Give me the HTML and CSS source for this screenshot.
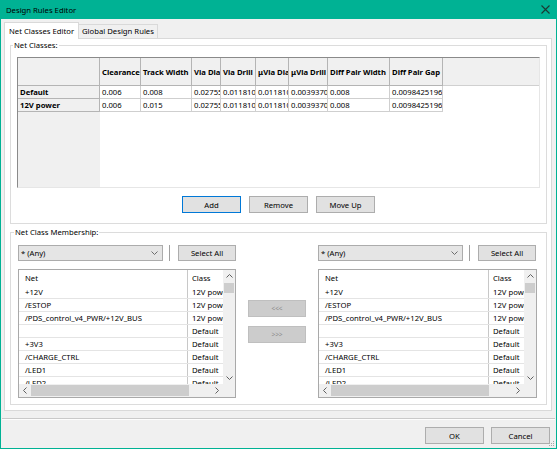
FILE: index.html
```html
<!DOCTYPE html>
<html>
<head>
<meta charset="utf-8">
<title>Design Rules Editor</title>
<link rel="stylesheet" href="styles.css">
</head>
<body>
<div class="window">
  <div class="titlebar">
    <span class="title">Design Rules Editor</span>
    <svg class="close" width="9" height="9" viewBox="0 0 9 9"><path d="M0.5 0.5L8.5 8.5M8.5 0.5L0.5 8.5" stroke="#1b3a33" stroke-width="1.1" fill="none"/></svg>
  </div>
  <div class="client">
    <div class="tabs">
      <div class="tab active">Net Classes Editor</div>
      <div class="tab">Global Design Rules</div>
    </div>
    <div class="page">
      <fieldset class="group g1">
        <legend>Net Classes:</legend>
        <div class="grid">
          <div class="hc corner"></div>
          <div class="hc">Clearance</div>
          <div class="hc">Track Width</div>
          <div class="hc">Via Dia</div>
          <div class="hc">Via Drill</div>
          <div class="hc">μVia Dia</div>
          <div class="hc">μVia Drill</div>
          <div class="hc">Diff Pair Width</div>
          <div class="hc">Diff Pair Gap</div>
          <div class="hfill"></div>

          <div class="rl">Default</div>
          <div class="dc">0.006</div>
          <div class="dc">0.008</div>
          <div class="dc">0.027559</div>
          <div class="dc">0.011810</div>
          <div class="dc">0.011810</div>
          <div class="dc">0.0039370</div>
          <div class="dc">0.008</div>
          <div class="dc">0.00984251968</div>
          <div class="dfill"></div>

          <div class="rl">12V power</div>
          <div class="dc">0.006</div>
          <div class="dc">0.015</div>
          <div class="dc">0.027559</div>
          <div class="dc">0.011810</div>
          <div class="dc">0.011810</div>
          <div class="dc">0.0039370</div>
          <div class="dc">0.008</div>
          <div class="dc">0.00984251968</div>
          <div class="dfill"></div>

          <div class="lfill"></div>
          <div class="bfill"></div>
        </div>
        <div class="btnrow">
          <button class="btn default">Add</button>
          <button class="btn">Remove</button>
          <button class="btn">Move Up</button>
        </div>
      </fieldset>

      <fieldset class="group g2">
        <legend>Net Class Membership:</legend>
        <div class="members">
          <div class="side left">
            <div class="toolbar">
              <div class="combo"><span>* (Any)</span><svg width="7" height="4" viewBox="0 0 7 4"><path d="M0.5 0.5L3.5 3.5L6.5 0.5" stroke="#6d6d6d" fill="none"/></svg></div>
              <div class="vsep"></div>
              <button class="btn selall">Select All</button>
            </div>
            <div class="list">
              <div class="lmain">
                <div class="ltable">
                  <div class="lrow lhead"><div class="cnet">Net</div><div class="ccls">Class</div></div>
                  <div class="lrow"><div class="cnet">+12V</div><div class="ccls">12V power</div></div>
                  <div class="lrow"><div class="cnet">/ESTOP</div><div class="ccls">12V power</div></div>
                  <div class="lrow"><div class="cnet">/PDS_control_v4_PWR/+12V_BUS</div><div class="ccls">12V power</div></div>
                  <div class="lrow"><div class="cnet"></div><div class="ccls">Default</div></div>
                  <div class="lrow"><div class="cnet">+3V3</div><div class="ccls">Default</div></div>
                  <div class="lrow"><div class="cnet">/CHARGE_CTRL</div><div class="ccls">Default</div></div>
                  <div class="lrow"><div class="cnet">/LED1</div><div class="ccls">Default</div></div>
                  <div class="lrow"><div class="cnet">/LED2</div><div class="ccls">Default</div></div>
                </div>
                <div class="vscroll">
                  <div class="arrow"><svg width="7" height="4" viewBox="0 0 7 4"><path d="M0.5 3.5L3.5 0.5L6.5 3.5" stroke="#606060" fill="none"/></svg></div>
                  <div class="vtrack"><div class="vthumb"></div></div>
                  <div class="arrow"><svg width="7" height="4" viewBox="0 0 7 4"><path d="M0.5 0.5L3.5 3.5L6.5 0.5" stroke="#606060" fill="none"/></svg></div>
                </div>
              </div>
              <div class="hbar">
                <div class="hscroll">
                  <div class="arrow"><svg width="4" height="7" viewBox="0 0 4 7"><path d="M3.5 0.5L0.5 3.5L3.5 6.5" stroke="#606060" fill="none"/></svg></div>
                  <div class="hthumb"></div>
                  <div class="htrack"></div>
                  <div class="arrow"><svg width="4" height="7" viewBox="0 0 4 7"><path d="M0.5 0.5L3.5 3.5L0.5 6.5" stroke="#606060" fill="none"/></svg></div>
                </div>
                <div class="sbcorner"></div>
              </div>
            </div>
          </div>

          <div class="middle">
            <button class="btn disabled">&lt;&lt;&lt;</button>
            <button class="btn disabled">&gt;&gt;&gt;</button>
          </div>

          <div class="side right">
            <div class="toolbar">
              <div class="combo"><span>* (Any)</span><svg width="7" height="4" viewBox="0 0 7 4"><path d="M0.5 0.5L3.5 3.5L6.5 0.5" stroke="#6d6d6d" fill="none"/></svg></div>
              <div class="vsep"></div>
              <button class="btn selall">Select All</button>
            </div>
            <div class="list">
              <div class="lmain">
                <div class="ltable">
                  <div class="lrow lhead"><div class="cnet">Net</div><div class="ccls">Class</div></div>
                  <div class="lrow"><div class="cnet">+12V</div><div class="ccls">12V power</div></div>
                  <div class="lrow"><div class="cnet">/ESTOP</div><div class="ccls">12V power</div></div>
                  <div class="lrow"><div class="cnet">/PDS_control_v4_PWR/+12V_BUS</div><div class="ccls">12V power</div></div>
                  <div class="lrow"><div class="cnet"></div><div class="ccls">Default</div></div>
                  <div class="lrow"><div class="cnet">+3V3</div><div class="ccls">Default</div></div>
                  <div class="lrow"><div class="cnet">/CHARGE_CTRL</div><div class="ccls">Default</div></div>
                  <div class="lrow"><div class="cnet">/LED1</div><div class="ccls">Default</div></div>
                  <div class="lrow"><div class="cnet">/LED2</div><div class="ccls">Default</div></div>
                </div>
                <div class="vscroll">
                  <div class="arrow"><svg width="7" height="4" viewBox="0 0 7 4"><path d="M0.5 3.5L3.5 0.5L6.5 3.5" stroke="#606060" fill="none"/></svg></div>
                  <div class="vtrack"><div class="vthumb"></div></div>
                  <div class="arrow"><svg width="7" height="4" viewBox="0 0 7 4"><path d="M0.5 0.5L3.5 3.5L6.5 0.5" stroke="#606060" fill="none"/></svg></div>
                </div>
              </div>
              <div class="hbar">
                <div class="hscroll">
                  <div class="arrow"><svg width="4" height="7" viewBox="0 0 4 7"><path d="M3.5 0.5L0.5 3.5L3.5 6.5" stroke="#606060" fill="none"/></svg></div>
                  <div class="hthumb"></div>
                  <div class="htrack"></div>
                  <div class="arrow"><svg width="4" height="7" viewBox="0 0 4 7"><path d="M0.5 0.5L3.5 3.5L0.5 6.5" stroke="#606060" fill="none"/></svg></div>
                </div>
                <div class="sbcorner"></div>
              </div>
            </div>
          </div>
        </div>
      </fieldset>
    </div>
    <div class="separator"></div>
    <div class="dlgbtns">
      <button class="btn">OK</button>
      <button class="btn">Cancel</button>
    </div>
  </div>
  <svg class="grip" width="6" height="6" viewBox="0 0 6 6">
    <rect x="4" y="0" width="1" height="1" fill="#a8a8a8"/>
    <rect x="2" y="2" width="1" height="1" fill="#a8a8a8"/>
    <rect x="4" y="2" width="1" height="1" fill="#a8a8a8"/>
    <rect x="0" y="4" width="1" height="1" fill="#a8a8a8"/>
    <rect x="2" y="4" width="1" height="1" fill="#a8a8a8"/>
    <rect x="4" y="4" width="1" height="1" fill="#a8a8a8"/>
  </svg>
</div>
</body>
</html>
```

FILE: styles.css
```css
* { box-sizing: border-box; }
html, body { margin: 0; padding: 0; }
body {
  width: 557px;
  height: 449px;
  overflow: hidden;
  font-family: "Noto Sans", "Open Sans", sans-serif;
  font-size: 7.7px;
  color: #000;
  background: #f0f0f0;
}
.window {
  position: relative;
  width: 557px;
  height: 449px;
  border: 1px solid #00b294;
  border-top: 0;
  display: flex;
  flex-direction: column;
  background: #f0f0f0;
}
.titlebar {
  height: 19px;
  flex: none;
  background: #00b294;
  display: flex;
  align-items: center;
  justify-content: space-between;
  padding: 0 6px 0 5px;
  color: #000;
}
.client {
  flex: 1;
  display: flex;
  flex-direction: column;
  padding: 3px 4px 0 3px;
}
.tabs {
  display: flex;
  align-items: flex-end;
  height: 16px;
  position: relative;
  z-index: 1;
}
.tab {
  height: 14px;
  border: 1px solid #d9d9d9;
  border-bottom: 0;
  background: #f0f0f0;
  padding: 0 3px;
  line-height: 13px;
  white-space: nowrap;
}
.tab + .tab { border-left: 0; }
.tab.active {
  height: 17px;
  margin-bottom: -1px;
  background: #fff;
  width: 75px;
  padding-left: 4px;
  line-height: 16px;
}
.page {
  border: 1px solid #d9d9d9;
  background: #fff;
  padding: 1px 4px 5px 5px;
  display: flex;
  flex-direction: column;
}
.group {
  margin: 0;
  border: 1px solid #dcdcdc;
  min-width: 0;
}
.group legend {
  padding: 0 1px;
  margin-left: -4px;
  line-height: 11px;
}
.g1 { padding: 6px 6px 10px 6px; }
.g2 { padding: 7px 9px 6px 7px; margin-top: 3px; }
.grid {
  height: 131px;
  display: grid;
  grid-template-columns: 82px 41px 51px 29px 35px 33px 39px 62px 53px 1fr;
  grid-template-rows: 28px 13px 13px 1fr;
  border-top: 1px solid #8a8a8a;
  border-left: 1px solid #8a8a8a;
  border-right: 1px solid #e6e6e6;
  border-bottom: 1px solid #e6e6e6;
  background: #fff;
}
.hc, .rl, .dc {
  overflow: hidden;
  white-space: nowrap;
  padding-left: 2px;
  display: flex;
  align-items: center;
}
.hc {
  background: #f0f0f0;
  font-weight: bold;
  border-right: 1px solid #b4b4b4;
  border-bottom: 1px solid #b4b4b4;
}
.hfill {
  background: #f0f0f0;
  border-bottom: 1px solid #d0d0d0;
}
.rl {
  background: #f0f0f0;
  font-weight: bold;
  border-right: 1px solid #b4b4b4;
  border-bottom: 1px solid #b4b4b4;
}
.dc {
  border-right: 1px solid #cfcfcf;
  border-bottom: 1px solid #cfcfcf;
}
.lfill { background: #f0f0f0; }
.bfill { grid-column: 2 / -1; }
.btnrow {
  display: flex;
  justify-content: center;
  gap: 8px;
  margin-top: 8px;
}
.btn {
  font: inherit;
  color: #000;
  height: 17px;
  width: 59px;
  padding: 0;
  background: #e1e1e1;
  border: 1px solid #adadad;
  border-radius: 0;
  white-space: nowrap;
}
.btn.default { border-color: #0078d7; }
.btn.disabled {
  background: #cccccc;
  border-color: #bfbfbf;
  color: #8d8d8d;
  width: 58px;
  font-size: 6.5px;
}
.members {
  display: flex;
}
.side { display: flex; flex-direction: column; }
.side.left { width: 218px; }
.side.right { flex: 1; }
.toolbar {
  display: flex;
  align-items: center;
  height: 16px;
}
.combo {
  flex: 1;
  height: 16px;
  background: #e5e5e5;
  border: 1px solid #acacac;
  display: flex;
  align-items: center;
  justify-content: space-between;
  padding: 0 4px 0 2px;
}
.vsep {
  width: 1px;
  height: 16px;
  background: #a0a0a0;
  margin: 0 8px 0 6px;
}
.btn.selall { width: 58px; height: 16px; }
.side.right .btn.selall { margin-right: 1px; }
.middle {
  width: 82px;
  display: flex;
  flex-direction: column;
  align-items: center;
  gap: 9px;
  padding-top: 55px;
}
.list {
  margin-top: 8px;
  height: 129px;
  border: 1px solid #a9a9a9;
  background: #fff;
  display: flex;
  flex-direction: column;
}
.lmain {
  flex: 1;
  min-height: 0;
  display: flex;
}
.ltable {
  flex: 1;
  overflow: hidden;
  min-width: 0;
}
.lrow {
  display: flex;
  height: 13px;
  border-bottom: 1px solid #e4e4e4;
}
.lrow.lhead { height: 16px; border-bottom: 0; }
.cnet {
  flex: 1;
  padding-left: 6px;
  white-space: nowrap;
  overflow: hidden;
  display: flex;
  align-items: center;
}
.ccls {
  width: 36px;
  padding-left: 4px;
  border-left: 1px solid #c8c8c8;
  white-space: nowrap;
  overflow: hidden;
  display: flex;
  align-items: center;
}
.vscroll {
  width: 12px;
  background: #f0f0f0;
  display: flex;
  flex-direction: column;
}
.arrow {
  width: 12px;
  height: 12px;
  flex: none;
  display: flex;
  align-items: center;
  justify-content: center;
}
.vtrack { flex: 1; padding: 1px 1px; }
.vthumb { height: 10px; background: #cdcdcd; }
.hbar {
  height: 13px;
  display: flex;
  flex: none;
}
.hscroll {
  flex: 1;
  display: flex;
  background: #f0f0f0;
}
.hscroll .arrow { height: 13px; }
.hthumb {
  width: 158px;
  margin: 1px 0;
  background: #cdcdcd;
}
.htrack { flex: 1; }
.sbcorner { width: 12px; background: #f0f0f0; }
.separator {
  margin-top: 7px;
  height: 2px;
  border-top: 1px solid #c9c9c9;
  border-bottom: 1px solid #fdfdfd;
  margin-left: -2px;
  margin-right: -3px;
}
.dlgbtns {
  display: flex;
  justify-content: flex-end;
  gap: 7px;
  margin-top: 7px;
  padding-right: 2px;
}
.grip {
  position: absolute;
  right: 1px;
  bottom: 1px;
}
```
